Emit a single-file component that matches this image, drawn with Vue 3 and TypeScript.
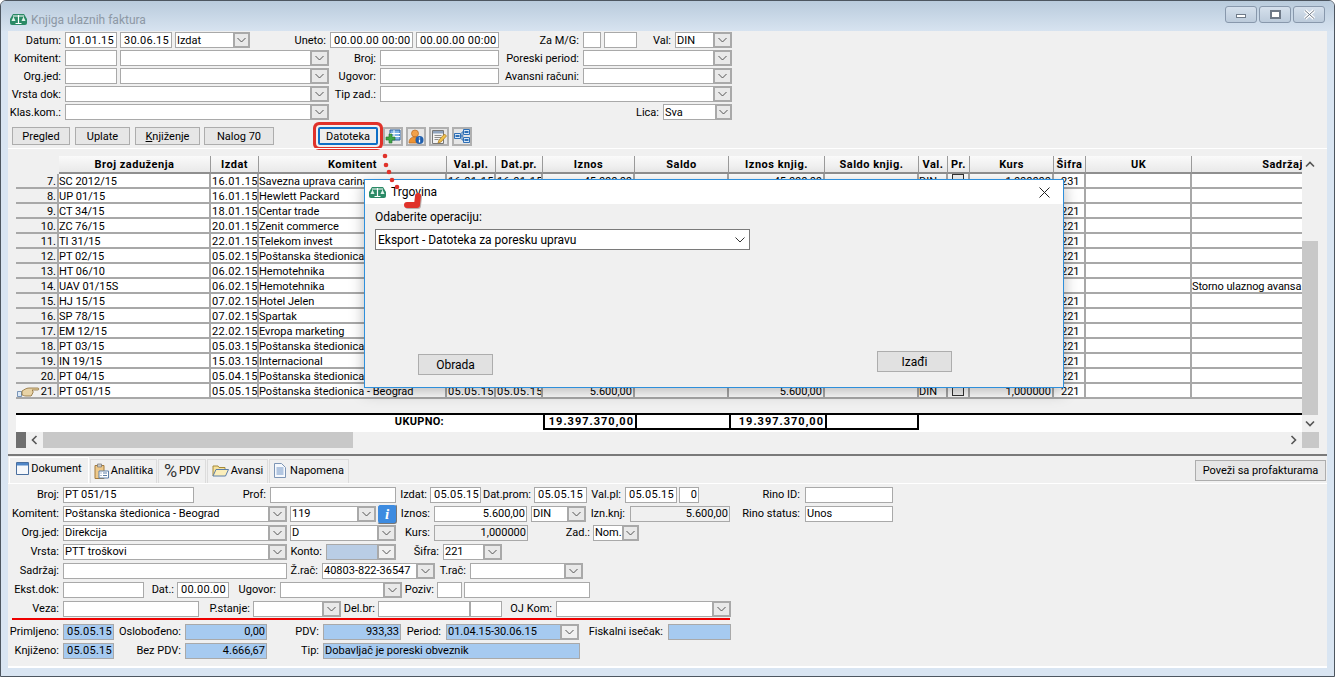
<template>
  <div class="window">
    <header class="titlebar">
      <svg class="logo" width="17" height="13" viewBox="0 0 17 13">
        <path d="M3 1h11l3 5v4a2 2 0 0 1-2 2H2a2 2 0 0 1-2-2V6z" fill="#2b8a66" />
        <path d="M3 3h11M8.5 2v8M5.5 10.500h6" stroke="#fff" stroke-width="1.200" fill="none" />
        <path d="M1.500 8L3.500 3.500 5.500 8zM11.500 8l2-4.500 2 4.500z" fill="#dff3ea" />
      </svg>
      <span class="title">Knjiga ulaznih faktura</span>
      <div class="win-buttons">
        <button class="win-btn"><span class="g-min"></span></button>
        <button class="win-btn"><span class="g-max"></span></button>
        <button class="win-btn">
          <svg width="13" height="11" viewBox="0 0 13 11">
            <path d="M2 1.500l9 8M11 1.500l-9 8" stroke="#fff" stroke-width="3.200" />
            <path d="M2 1.500l9 8M11 1.500l-9 8" stroke="#6f7a88" stroke-width="1" />
          </svg>
        </button>
      </div>
    </header>

    <main class="client">
      <section class="filters">
        <div v-for="(row, r) in filterRows" :key="r" class="form-row filter-row">
          <template v-for="(f, i) in row" :key="i">
            <label v-if="f.kind === 'l'" class="lab" :style="f.style"><span>{{ f.text }}</span></label>
            <div v-else class="field" :class="[f.kind === 'c' ? 'combo' : 'input', f.tone, { right: f.right, dt: isDate(f.text) }]" :style="f.style">
              <span class="val">{{ f.text }}</span>
              <span v-if="f.kind === 'c'" class="drop">
                <svg width="9" height="6" viewBox="0 0 9 6"><path d="M.5 1l4 4 4-4" fill="none" stroke="#555" /></svg>
              </span>
            </div>
          </template>
        </div>
      </section>

      <section class="toolbar">
        <button class="btn b-pregled">Pregled</button>
        <button class="btn b-uplate">Uplate</button>
        <button class="btn b-knjiz"><u>K</u>njiženje</button>
        <button class="btn b-nalog">Nalog 70</button>
        <button class="btn b-datoteka">Datoteka</button>
        <button class="tool t-first">
          <svg width="16" height="15" viewBox="0 0 16 15">
            <path d="M5 1h10v10H5z" fill="#7fb4e6" stroke="#2a5f9e" />
            <path d="M5 4.500h10M5 7.500h10M9 1v10" stroke="#fff" />
            <path d="M4 5h3v3h3v3H7v3H4v-3H1V8h3z" fill="#3fa648" stroke="#26702d" stroke-width=".6" />
          </svg>
        </button>
        <button class="tool">
          <svg width="16" height="16" viewBox="0 0 16 16">
            <circle cx="7" cy="4.500" r="3.500" fill="#f2a14a" stroke="#b9681e" stroke-width=".7" />
            <path d="M1 14c0-4 2-6 6-6s5 2 5 6z" fill="#ee9434" stroke="#b9681e" stroke-width=".7" />
            <circle cx="11.500" cy="11" r="4" fill="#1f5fae" />
            <path d="M11.500 8.500v1M11.500 10.500v3" stroke="#fff" stroke-width="1.300" />
          </svg>
        </button>
        <button class="tool">
          <svg width="16" height="16" viewBox="0 0 16 16">
            <path d="M1.500 1.500h11v13h-11z" fill="#f3f3f3" stroke="#777" />
            <path d="M2 2h10v2.500H2z" fill="#8fa3bd" />
            <path d="M3.500 6.500h7M3.500 8.500h7M3.500 10.500h4" stroke="#8d8d8d" />
            <path d="M7 14l1-3 5.500-6 2 2L10 13z" fill="#efc04c" stroke="#a8761c" stroke-width=".7" />
          </svg>
        </button>
        <button class="tool">
          <svg width="16" height="15" viewBox="0 0 16 15">
            <path d="M.5 4.500h6v5h-6zM9.500.5h6v5h-6zM9.500 8.500h6v5h-6z" fill="#d8e8f8" stroke="#2f6fb5" />
            <path d="M1.500 6h4v2h-4zM10.500 2h4v2h-4zM10.500 10h4v2h-4z" fill="#2f6fb5" />
            <path d="M6.500 7h3M8 3v8M8 3h1.500M8 11h1.500" stroke="#2f6fb5" fill="none" />
          </svg>
        </button>
      </section>

      <section class="grid-panel">
        <div class="grid-main">
          <div class="g-table">
            <div class="g-row g-head" :style="{ gridTemplateColumns: colTemplate }">
              <div v-for="(c, i) in columns" :key="i" class="g-hcell" :class="{ 'g-blank': i === 0 }">{{ c.title }}</div>
            </div>
            <div v-for="row in rows" :key="row.no" class="g-row" :style="{ gridTemplateColumns: colTemplate }">
              <div class="g-cell g-ind">
                <svg v-if="row.no === 21" class="hand" width="23" height="11" viewBox="0 0 23 11">
                  <path d="M.5 5.500h4v5h-4z" fill="#dce9f7" stroke="#5c7fa8" stroke-width=".8" />
                  <path d="M5 5c2-1 4-3 7-3h9c1 0 1 2 0 2h-6l1 1v2l-1 1v1l-1 1H9c-2 0-3-1-4-1z" fill="#e8d3a6" stroke="#8c6c36" stroke-width=".8" />
                </svg>
                <span>{{ row.no }}.</span>
              </div>
              <div class="g-cell">{{ row.doc }}</div>
              <div class="g-cell g-date">{{ row.date }}</div>
              <div class="g-cell">{{ row.partner }}</div>
              <div class="g-cell g-date">{{ row.due }}</div>
              <div class="g-cell g-date">{{ row.issued }}</div>
              <div class="g-cell g-num">{{ row.amount }}</div>
              <div class="g-cell"></div>
              <div class="g-cell g-num">{{ row.amount }}</div>
              <div class="g-cell"></div>
              <div class="g-cell">{{ row.cur }}</div>
              <div class="g-cell g-check"><span v-if="row.cur" class="check"></span></div>
              <div class="g-cell g-num">{{ row.rate }}</div>
              <div class="g-cell g-code">{{ row.code }}</div>
              <div class="g-cell"></div>
              <div class="g-cell g-last">{{ row.note }}</div>
            </div>
            <div class="g-row g-total" :style="{ gridTemplateColumns: colTemplate }">
              <div class="t-label">UKUPNO:</div>
              <div class="t-cell">19.397.370,00</div>
              <div class="t-cell"></div>
              <div class="t-cell">19.397.370,00</div>
              <div class="t-cell"></div>
            </div>
          </div>
          <div class="vscroll">
            <span class="v-arrow">
              <svg width="10" height="7" viewBox="0 0 10 7"><path d="M1 5.500l4-4 4 4" fill="none" stroke="#555" stroke-width="1.600" /></svg>
            </span>
            <span class="v-space"></span>
            <span class="v-thumb"></span>
            <span class="v-arrow">
              <svg width="10" height="7" viewBox="0 0 10 7"><path d="M1 1.500l4 4 4-4" fill="none" stroke="#555" stroke-width="1.600" /></svg>
            </span>
          </div>
        </div>
        <div class="hscroll">
          <span class="h-block"></span>
          <span class="h-arrow">
            <svg width="7" height="10" viewBox="0 0 7 10"><path d="M5.500 1l-4 4 4 4" fill="none" stroke="#555" stroke-width="1.600" /></svg>
          </span>
          <span class="h-thumb"></span>
          <span class="h-space"></span>
          <span class="h-arrow">
            <svg width="7" height="10" viewBox="0 0 7 10"><path d="M1.500 1l4 4-4 4" fill="none" stroke="#555" stroke-width="1.600" /></svg>
          </span>
          <span class="h-corner"></span>
        </div>
      </section>

      <nav class="tabs">
        <div class="tab active w-dok">
          <svg width="13" height="13" viewBox="0 0 13 13">
            <path d="M.5 .5h12v12H.5z" fill="#f6f8fb" stroke="#4a6f9f" />
            <path d="M1 1h11v2.500H1z" fill="#4f86c8" />
          </svg>
          Dokument
        </div>
        <div class="tab w-ana">
          <svg width="15" height="16" viewBox="0 0 15 16">
            <path d="M1 2.500h9v13H1z" fill="#eec98a" stroke="#a37a3c" />
            <path d="M3.500 1h4v3h-4z" fill="#c9c9c9" stroke="#777" stroke-width=".7" />
            <path d="M5 8h9.500v7H5z" fill="#fff" stroke="#5c7fa8" />
            <path d="M6.500 10h1M9 10h4M6.500 12.500h1M9 12.500h4" stroke="#5c7fa8" />
          </svg>
          Analitika
        </div>
        <div class="tab w-pdv"><span class="pct">%</span>PDV</div>
        <div class="tab w-ava">
          <svg width="17" height="13" viewBox="0 0 17 13">
            <path d="M1 12V2h5l1 1.500h6V6" fill="#f7e29b" stroke="#a58a3a" />
            <path d="M1 12l3-6.500h12.500L13.500 12z" fill="#fbeeba" stroke="#5b7ea8" />
          </svg>
          Avansi
        </div>
        <div class="tab w-nap">
          <svg width="12" height="15" viewBox="0 0 12 15">
            <path d="M.5 .5h7l4 4v10H.5z" fill="#f6f9fd" stroke="#7d95b5" />
            <path d="M2.500 5h7M2.500 7h7M2.500 9h7M2.500 11h7" stroke="#6f93c4" />
          </svg>
          Napomena
        </div>
        <button class="btn b-povezi">Poveži sa profakturama</button>
      </nav>

      <section class="doc-panel">
        <template v-for="(row, r) in docRows" :key="r">
          <div v-if="row.length === 0" class="rule"></div>
          <div v-else class="form-row doc-row">
            <template v-for="(f, i) in row" :key="i">
              <label v-if="f.kind === 'l'" class="lab" :style="f.style"><span>{{ f.text }}</span></label>
              <button v-else-if="f.kind === 'info'" class="info" :style="f.style"><i>i</i></button>
              <div v-else class="field" :class="[f.kind === 'c' ? 'combo' : 'input', f.tone, { right: f.right, dt: isDate(f.text) }]" :style="f.style">
                <span class="val">{{ f.text }}</span>
                <span v-if="f.kind === 'c'" class="drop">
                  <svg width="9" height="6" viewBox="0 0 9 6"><path d="M.5 1l4 4 4-4" fill="none" stroke="#555" /></svg>
                </span>
              </div>
            </template>
          </div>
        </template>
      </section>
    </main>

    <div class="dialog">
      <div class="d-title">
        <svg width="17" height="13" viewBox="0 0 17 13">
          <path d="M3 1h11l3 5v4a2 2 0 0 1-2 2H2a2 2 0 0 1-2-2V6z" fill="#2b8a66" />
          <path d="M3 3h11M8.500 2v8M5.500 10.500h6" stroke="#fff" stroke-width="1.200" fill="none" />
          <path d="M1.500 8L3.500 3.500 5.500 8zM11.500 8l2-4.500 2 4.500z" fill="#dff3ea" />
        </svg>
        <span>Trgovina</span>
        <svg class="d-close" width="11" height="11" viewBox="0 0 11 11"><path d="M.5 .5l10 10M10.500 .5l-10 10" stroke="#222" /></svg>
      </div>
      <div class="d-body">
        <div class="d-label">Odaberite operaciju:</div>
        <div class="d-select">
          <span>Eksport - Datoteka za poresku upravu</span>
          <svg width="10" height="6" viewBox="0 0 10 6"><path d="M.5 .5L5 5l4.500-4.500" fill="none" stroke="#333" /></svg>
        </div>
        <div class="d-actions">
          <button class="btn d-run">Obrada</button>
          <button class="btn d-exit">Izađi</button>
        </div>
      </div>
    </div>

    <svg class="callout" width="60" height="70" viewBox="0 0 60 70">
      <g fill="#e0322a">
        <circle cx="4" cy="5" r="2.300" />
        <circle cx="5" cy="14" r="2.300" />
        <circle cx="8" cy="21" r="2.300" />
        <circle cx="11" cy="29" r="2.300" />
        <circle cx="16" cy="36" r="2.300" />
      </g>
      <path d="M37 45l-1 9-10 0" fill="none" stroke="#b9b2b0" stroke-width="6" stroke-linejoin="round" stroke-linecap="round" transform="translate(1 1)" />
      <path d="M37 45l-1 9-10 0" fill="none" stroke="#e0322a" stroke-width="6" stroke-linejoin="round" stroke-linecap="round" />
    </svg>
  </div>
</template>

<script setup lang="ts">
import type { CSSProperties } from 'vue'

interface Field {
  kind: 'l' | 'i' | 'c' | 'info'
  a: number
  b: number
  text: string
  tone?: string
  right?: boolean
}

interface Placed extends Field {
  style: CSSProperties
}

interface Row {
  no: number
  doc: string
  date: string
  partner: string
  due?: string
  issued?: string
  amount?: string
  cur?: string
  rate?: string
  code?: string
  note?: string
}

const CLIENT_X = 8

const L = (b: number, text: string): Field => ({ kind: 'l', a: -1, b, text })
const I = (a: number, b: number, text = '', tone = '', right = false): Field => ({ kind: 'i', a, b, text, tone, right })
const C = (a: number, b: number, text = '', tone = ''): Field => ({ kind: 'c', a, b, text, tone })

const isDate = (s: string) => /^\d\d\.\d\d\.\d\d( |$)/.test(s)

// fields are given by their x range, a label fills the room up to its right edge
function place(rows: Field[][]): Placed[][] {
  return rows.map((row) => {
    let cur = CLIENT_X
    return row.map((f) => {
      const a = f.a < 0 ? cur : f.a
      const style = { marginLeft: a - cur + 'px', width: f.b - a + 'px' }
      cur = f.b
      return { ...f, style }
    })
  })
}

const filterRows = place([
  [L(61, 'Datum:'), I(65, 117, '01.01.15'), I(120, 172, '30.06.15'), C(175, 250, 'Izdat', 'narrow'), L(326, 'Uneto:'), I(330, 413, '00.00.00 00:00'), I(416, 499, '00.00.00 00:00'), L(579, 'Za M/G:'), I(583, 601), I(604, 637), L(671, 'Val:'), C(675, 732, 'DIN')],
  [L(61, 'Komitent:'), I(65, 117), C(120, 329), L(376, 'Broj:'), I(380, 499), L(579, 'Poreski period:'), C(583, 732)],
  [L(61, 'Org.jed:'), I(65, 117), C(120, 329), L(376, 'Ugovor:'), I(380, 499), L(579, 'Avansni računi:'), C(583, 732)],
  [L(61, 'Vrsta dok:'), C(65, 329), L(376, 'Tip zad.:'), C(380, 732)],
  [L(61, 'Klas.kom.:'), C(65, 329), L(659, 'Lica:'), C(663, 732, 'Sva', 'narrow')],
])

const docRows = place([
  [L(59, 'Broj:'), I(63, 194, 'PT 051/15'), L(266, 'Prof:'), I(270, 396), L(427, 'Izdat:'), I(430, 481, '05.05.15'), L(531, 'Dat.prom:'), I(534, 587, '05.05.15'), L(621, 'Val.pl:'), I(625, 677, '05.05.15'), I(679, 699, '0', '', true), L(800, 'Rino ID:'), I(805, 893)],
  [L(59, 'Komitent:'), C(63, 287, 'Poštanska štedionica - Beograd'), C(290, 376, '119'), { kind: 'info', a: 377, b: 397, text: '' }, L(430, 'Iznos:'), I(434, 527, '5.600,00', '', true), C(531, 586, 'DIN'), L(625, 'Izn.knj:'), I(630, 730, '5.600,00', 'ro', true), L(800, 'Rino status:'), I(805, 893, 'Unos')],
  [L(59, 'Org.jed:'), C(63, 287, 'Direkcija'), C(290, 396, 'D'), L(430, 'Kurs:'), I(434, 528, '1,000000', 'ro', true), L(590, 'Zad.:'), C(593, 639, 'Nom.', 'narrow')],
  [L(59, 'Vrsta:'), C(63, 287, 'PTT troškovi'), L(322, 'Konto:'), C(326, 396, '', 'konto'), L(439, 'Šifra:'), C(443, 502, '221')],
  [L(59, 'Sadržaj:'), I(63, 287), L(318, 'Ž.rač:'), C(322, 435, '40803-822-36547'), L(466, 'T.rač:'), C(470, 583)],
  [L(59, 'Ekst.dok:'), I(63, 144), L(174, 'Dat.:'), I(177, 229, '00.00.00'), L(276, 'Ugovor:'), C(280, 402), L(434, 'Poziv:'), I(437, 462), I(464, 590)],
  [L(59, 'Veza:'), I(63, 199), L(250, 'P.stanje:'), C(253, 341), L(375, 'Del.br:'), I(378, 470), I(470, 502), L(552, 'OJ Kom:'), C(556, 731)],
  [],
  [L(59, 'Primljeno:'), I(63, 114, '05.05.15', 'blue'), L(181, 'Oslobođeno:'), I(185, 267, '0,00', 'blue', true), L(319, 'PDV:'), I(323, 401, '933,33', 'blue', true), L(441, 'Period:'), C(446, 579, '01.04.15-30.06.15', 'blue'), L(663, 'Fiskalni isečak:'), I(668, 731, '', 'blue')],
  [L(59, 'Knjiženo:'), I(63, 114, '05.05.15', 'blue'), L(181, 'Bez PDV:'), I(185, 267, '4.666,67', 'blue', true), L(319, 'Tip:'), I(323, 580, 'Dobavljač je poreski obveznik', 'blue')],
])

const columns = [
  { title: '', w: 43 },
  { title: 'Broj zaduženja', w: 152 },
  { title: 'Izdat', w: 48 },
  { title: 'Komitent', w: 188 },
  { title: 'Val.pl.', w: 49 },
  { title: 'Dat.pr.', w: 47 },
  { title: 'Iznos', w: 92 },
  { title: 'Saldo', w: 94 },
  { title: 'Iznos knjig.', w: 96 },
  { title: 'Saldo knjig.', w: 94 },
  { title: 'Val.', w: 29 },
  { title: 'Pr.', w: 22 },
  { title: 'Kurs', w: 84 },
  { title: 'Šifra', w: 32 },
  { title: 'UK', w: 106 },
  // wider than the visible part, the table cuts it off
  { title: 'Sadržaj', w: 182 },
]
const colTemplate = columns.map((c) => c.w + 'px').join(' ')

const rows: Row[] = [
  { no: 7, doc: 'SC 2012/15', date: '16.01.15', partner: 'Savezna uprava carina', due: '16.01.15', issued: '16.01.15', amount: '45.000,00', cur: 'DIN', rate: '1,000000', code: '231' },
  { no: 8, doc: 'UP 01/15', date: '16.01.15', partner: 'Hewlett Packard' },
  { no: 9, doc: 'CT 34/15', date: '18.01.15', partner: 'Centar trade', code: '221' },
  { no: 10, doc: 'ZC 76/15', date: '20.01.15', partner: 'Zenit commerce', code: '221' },
  { no: 11, doc: 'TI 31/15', date: '22.01.15', partner: 'Telekom invest', code: '221' },
  { no: 12, doc: 'PT 02/15', date: '05.02.15', partner: 'Poštanska štedionica - Beograd', code: '221' },
  { no: 13, doc: 'HT 06/10', date: '06.02.15', partner: 'Hemotehnika', code: '221' },
  { no: 14, doc: 'UAV 01/15S', date: '06.02.15', partner: 'Hemotehnika', note: 'Storno ulaznog avansa' },
  { no: 15, doc: 'HJ 15/15', date: '07.02.15', partner: 'Hotel Jelen', code: '221' },
  { no: 16, doc: 'SP 78/15', date: '07.02.15', partner: 'Spartak', code: '221' },
  { no: 17, doc: 'EM 12/15', date: '22.02.15', partner: 'Evropa marketing', code: '221' },
  { no: 18, doc: 'PT 03/15', date: '05.03.15', partner: 'Poštanska štedionica - Beograd', code: '221' },
  { no: 19, doc: 'IN 19/15', date: '15.03.15', partner: 'Internacional', code: '221' },
  { no: 20, doc: 'PT 04/15', date: '05.04.15', partner: 'Poštanska štedionica - Beograd', code: '221' },
  { no: 21, doc: 'PT 051/15', date: '05.05.15', partner: 'Poštanska štedionica - Beograd', due: '05.05.15', issued: '05.05.15', amount: '5.600,00', cur: 'DIN', rate: '1,000000', code: '221' },
]
</script>

<style>
html,
body {
  margin: 0;
  overflow: hidden;
  background: #fff;
}
</style>

<style scoped>
.window {
  position: relative;
  box-sizing: border-box;
  width: 1335px;
  height: 677px;
  display: flex;
  flex-direction: column;
  padding: 0 7px 8px 7px;
  border: 1px solid #4d5660;
  border-radius: 6px 6px 0 0;
  background: #d9e5f2;
  color: #000;
  font: 11px/14px Roboto, Tahoma, sans-serif;
  overflow: hidden;
}

button {
  font: inherit;
  color: inherit;
  padding: 0;
}

.titlebar {
  display: flex;
  align-items: center;
  height: 30px;
  margin: 0 -7px;
  padding: 7px 9px 0 9px;
  box-sizing: border-box;
  background: linear-gradient(#b9cbdc, #d7e3f0);
}
.title {
  margin-left: 4px;
  font-size: 12px;
  color: #8d98a5;
}
.win-buttons {
  display: flex;
  gap: 2px;
  margin-left: auto;
  margin-top: -11px;
}
.win-btn {
  display: flex;
  align-items: center;
  justify-content: center;
  width: 32px;
  height: 17px;
  border: 1px solid #8898ac;
  border-radius: 3px;
  background: linear-gradient(#d5e0ec, #bccbdb);
}
.g-min {
  width: 10px;
  height: 4px;
  margin-top: 4px;
  box-sizing: border-box;
  border: 1px solid #6f7a88;
  background: #fff;
}
.g-max {
  width: 11px;
  height: 9px;
  box-sizing: border-box;
  border: 2px solid #6f7a88;
  background: #fff;
}

.client {
  display: flex;
  flex-direction: column;
  height: 637px;
  background: #f0f0f0;
}

.form-row {
  display: flex;
  align-items: center;
}
.filter-row {
  height: 18px;
}
.filter-row .val {
  line-height: 16px;
}
.filter-row .lab {
  padding-top: 2px;
}
.doc-row {
  height: 19px;
}

.lab {
  display: flex;
  justify-content: flex-end;
  flex: none;
  box-sizing: border-box;
  overflow: hidden;
  white-space: nowrap;
}
.field {
  display: flex;
  flex: none;
  box-sizing: border-box;
  height: 16px;
  background: #fff;
  overflow: hidden;
  white-space: nowrap;
}
.input,
.combo {
  border: 1px solid #a9a9a9;
}
.val {
  flex: 1;
  min-width: 0;
  padding: 0 1px;
  line-height: 14px;
  overflow: hidden;
}
.right .val {
  text-align: right;
}
.dt .val {
  padding-left: 3px;
  letter-spacing: 0.25px;
}
.drop {
  display: flex;
  align-items: center;
  justify-content: center;
  flex: none;
  box-sizing: border-box;
  width: 19px;
  border: 2px solid #a9a9a9;
  margin: -1px -1px -1px 0;
  background: #e9e9e9;
}
.narrow .drop {
  width: 17px;
}
.ro {
  background: #f0f0f0;
}
.blue {
  background: #a6caf0;
}
.konto {
  background: #b9cde5;
}
.konto .drop,
.blue .drop {
  background: #f0f0f0;
}

.toolbar {
  display: flex;
  align-items: flex-start;
  height: 19px;
  margin-top: 6px;
}
.btn {
  height: 18px;
  box-sizing: border-box;
  border: 1px solid #adadad;
  background: #e6e6e6;
}
.toolbar .btn {
  padding-top: 1px;
}
.b-pregled {
  width: 58px;
  margin-left: 4px;
}
.b-uplate {
  width: 55px;
  margin-left: 5px;
}
.b-knjiz {
  width: 65px;
  margin-left: 5px;
}
.b-nalog {
  width: 70px;
  margin-left: 4px;
}
.b-datoteka {
  width: 60px;
  margin-left: 44px;
  border: 2px solid #0f6fc6;
  background: #eeeeee;
  border-radius: 2px;
  box-shadow: 0 0 0 2px #f0f0f0, 0 0 0 5px #e0322a;
}
.tool {
  display: flex;
  align-items: center;
  justify-content: center;
  box-sizing: border-box;
  width: 20px;
  height: 19px;
  margin-left: 3px;
  border: 2px solid #b0b0b0;
  background: #e6e6e6;
}
.t-first {
  margin-left: 5px;
}

.grid-panel {
  box-sizing: border-box;
  height: 308px;
  margin-top: 2px;
  padding: 7px 0 6px 8px;
  border-top: 1px solid #fff;
  border-bottom: 2px solid #7a7a7a;
}
.grid-main {
  display: flex;
  height: 276px;
}
.g-table {
  width: 1286px;
  overflow: hidden;
}
.g-row {
  display: grid;
  height: 15px;
}
.g-head {
  height: 18px;
  font-weight: 700;
  letter-spacing: 0.5px;
}
.g-hcell {
  box-sizing: border-box;
  height: 18px;
  padding-top: 2px;
  text-align: center;
  border-right: 1px solid #9a9a9a;
  border-bottom: 2px solid #8f8f8f;
  background: linear-gradient(#fafafa, #e9e9e9);
  overflow: hidden;
  white-space: nowrap;
}
.g-blank {
  background: none;
  border: 0;
}
.g-cell {
  box-sizing: border-box;
  height: 15px;
  padding: 0 1px 0 0;
  line-height: 15px;
  background: #fff;
  border-right: 2px solid #a8a8a8;
  border-bottom: 2px solid #a8a8a8;
  overflow: hidden;
  white-space: nowrap;
}
.g-date {
  padding-left: 1px;
  letter-spacing: 0.35px;
}
.g-num {
  text-align: right;
}
.g-code {
  padding-left: 7px;
}
.g-last {
  border-right: 0;
  letter-spacing: -0.1px;
}
.g-ind {
  position: relative;
  display: flex;
  justify-content: flex-end;
  padding-right: 1px;
  background: #f0f0f0;
}
.hand {
  position: absolute;
  left: 1px;
  top: 2px;
}
.g-check {
  display: flex;
  justify-content: center;
  align-items: flex-start;
}
.check {
  width: 12px;
  height: 12px;
  box-sizing: border-box;
  border: 1px solid #333;
  background: #f4f4f4;
}
.g-total {
  height: 18px;
  margin-top: 14px;
  border-top: 2px solid #000;
  background: #fff;
  font-weight: 700;
}
.t-label {
  grid-column: 1 / 7;
  text-align: right;
  padding-right: 99px;
  line-height: 14px;
  letter-spacing: 0.3px;
}
.t-cell {
  box-sizing: border-box;
  height: 15px;
  padding: 0 1px;
  text-align: right;
  line-height: 13px;
  letter-spacing: 1px;
  border-left: 2px solid #000;
  border-bottom: 2px solid #000;
}
.t-cell:nth-child(5) {
  border-right: 2px solid #000;
}
.vscroll {
  display: flex;
  flex-direction: column;
  width: 16px;
}
.v-arrow {
  display: flex;
  align-items: center;
  justify-content: center;
  height: 17px;
}
.v-space {
  height: 68px;
}
.v-thumb {
  flex: 1;
  background: #c8c8c8;
}
.hscroll {
  display: flex;
  align-items: stretch;
  height: 16px;
}
.h-block {
  width: 10px;
  background: #707070;
}
.h-arrow {
  display: flex;
  align-items: center;
  justify-content: center;
  width: 17px;
}
.h-thumb {
  width: 310px;
  background: #c8c8c8;
}
.h-space {
  width: 932px;
}
.h-corner {
  width: 17px;
  background: #c8c8c8;
}

.tabs {
  display: flex;
  align-items: flex-end;
  height: 27px;
  padding-left: 1px;
}
.tab {
  display: flex;
  align-items: center;
  justify-content: center;
  gap: 2px;
  box-sizing: border-box;
  height: 24px;
  margin-right: 1px;
  padding-bottom: 2px;
  border: 1px solid #dcdcdc;
  border-bottom: 0;
  background: #f0f0f0;
  white-space: nowrap;
}
.tab.active {
  height: 26px;
  gap: 2px;
  border-color: #fff;
  padding-bottom: 4px;
}
.w-dok {
  width: 80px;
}
.w-ana {
  width: 67px;
}
.w-pdv {
  width: 48px;
}
.w-ava {
  width: 61px;
}
.w-nap {
  width: 80px;
  gap: 4px;
}
.pct {
  font-size: 18px;
  color: #333;
}
.b-povezi {
  width: 131px;
  height: 21px;
  margin: 0 1px 2px auto;
}

.doc-panel {
  flex: 1;
  box-sizing: border-box;
  padding-top: 1px;
  border-top: 1px solid #fff;
  border-bottom: 2px solid #fff;
}
.info {
  display: flex;
  align-items: center;
  justify-content: center;
  flex: none;
  height: 20px;
  box-sizing: border-box;
  border: 1px solid #f0f0f0;
  border-right-color: #777;
  border-bottom-color: #777;
  background: #3d8be0;
  border-radius: 3px;
  color: #fff;
  font: italic 700 15px/16px "Liberation Serif", serif;
}
.rule {
  width: 718px;
  height: 2px;
  margin: 0 0 2px 4px;
  background: #ee0000;
}

.dialog {
  position: absolute;
  left: 363px;
  top: 178px;
  box-sizing: border-box;
  display: flex;
  flex-direction: column;
  width: 700px;
  height: 209px;
  border: 1px solid #2e8fdb;
  background: #f0f0f0;
  box-shadow: 0 4px 14px rgba(0, 0, 0, 0.28);
  font-size: 12px;
}
.d-title {
  display: flex;
  align-items: center;
  gap: 5px;
  height: 24px;
  padding: 0 4px 0 4px;
  background: #fff;
}
.d-close {
  margin-left: auto;
  margin-right: 9px;
}
.d-body {
  flex: 1;
  display: flex;
  flex-direction: column;
  padding: 5px 10px 0 10px;
}
.d-label {
  line-height: 16px;
}
.d-select {
  display: flex;
  align-items: center;
  justify-content: space-between;
  box-sizing: border-box;
  width: 375px;
  height: 21px;
  margin-top: 4px;
  padding: 0 4px 0 2px;
  border: 1px solid #7a7a7a;
  background: #fff;
}
.d-actions {
  display: flex;
  justify-content: space-between;
  margin: 101px 101px 0 43px;
}
.d-actions .btn {
  height: 21px;
  width: 75px;
  background: #e1e1e1;
}
.d-run {
  margin-top: 3px;
}

.callout {
  position: absolute;
  left: 380px;
  top: 150px;
  pointer-events: none;
}
</style>
